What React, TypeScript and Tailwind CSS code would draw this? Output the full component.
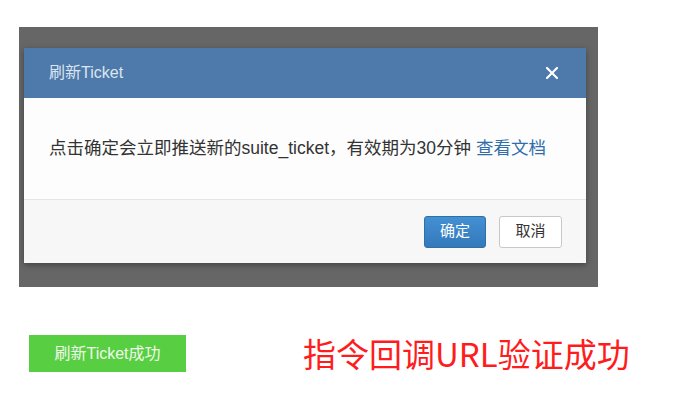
import { X } from "lucide-react";

const font = { fontFamily: '"Liberation Sans", "Noto Sans CJK SC", sans-serif' };

function RefreshModal() {
  return (
    <div className="w-[562px] bg-[#fdfdfd] shadow-[0_2px_6px_rgba(0,0,0,0.35)]">
      {/* Header */}
      <div className="h-[50px] bg-[#4d79ab] flex items-center justify-between pl-[25px] pr-[24px]">
        <span className="text-[16px] text-[#dce5ef]">刷新Ticket</span>
        <X size={20} strokeWidth={2.6} className="text-white" />
      </div>

      {/* Body */}
      <div className="h-[101px] flex items-center px-[25px] text-[17.5px] text-[#333]">
        <span>
          点击确定会立即推送新的suite_ticket，有效期为30分钟{" "}
          <a className="text-[#2f6eab]">查看文档</a>
        </span>
      </div>

      {/* Footer */}
      <div className="h-[64px] border-t border-[#e6e6e6] bg-[#f7f7f7] flex items-center justify-end gap-[13px] pr-[24px]">
        <button className="w-[62px] h-[32px] rounded-[3px] border border-[#2e6fa8] bg-gradient-to-b from-[#4390d3] to-[#3379bb] text-white text-[15px]">
          确定
        </button>
        <button className="w-[63px] h-[32px] rounded-[3px] border border-[#c8c8c8] bg-white text-[#333] text-[15px]">
          取消
        </button>
      </div>
    </div>
  );
}

export default function App() {
  return (
    <div className="w-[675px] h-[403px] bg-white flex flex-col pt-[27px] pl-[19px]" style={font}>
      {/* dimmed backdrop with dialog */}
      <div className="w-[579px] h-[260px] bg-[#666666] pt-[21px] pl-[5px]">
        <RefreshModal />
      </div>

      <div className="mt-[48px] ml-[10px] flex items-center">
        <div className="w-[157px] h-[37px] bg-[#58cf43] flex items-center justify-center text-[16px] text-[#eef9ea]">
          刷新Ticket成功
        </div>
        <span
          className="ml-[117px] text-[33px] text-[#ff1c1c] leading-none"
          style={{ fontFamily: '"Noto Sans CJK SC", sans-serif' }}
        >
          指令回调URL验证成功
        </span>
      </div>
    </div>
  );
}
